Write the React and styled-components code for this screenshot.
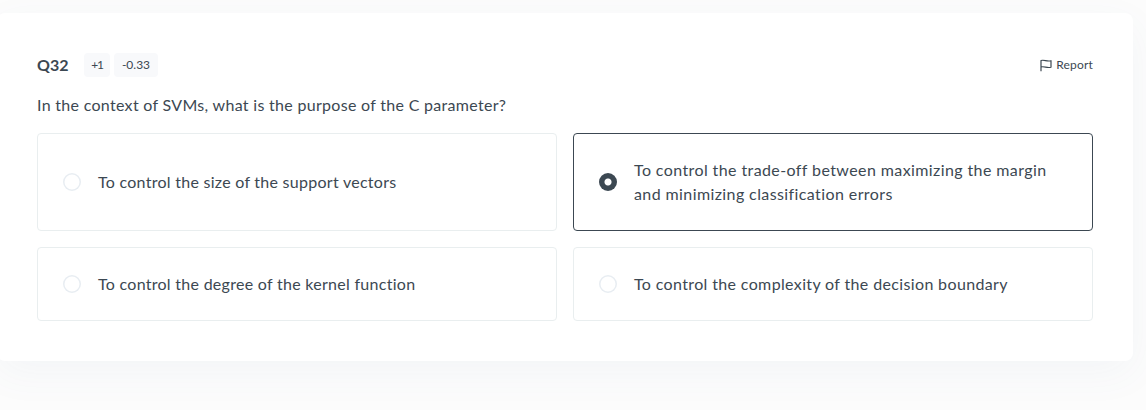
import React, { useState } from "react";
import styled, { createGlobalStyle } from "styled-components";

const options = [
  { id: 1, text: "To control the size of the support vectors", spacing: 0.27 },
  {
    id: 2,
    text: "To control the trade-off between maximizing the margin and minimizing classification errors",
    spacing: 0.4,
  },
  { id: 3, text: "To control the degree of the kernel function", spacing: 0.28 },
  { id: 4, text: "To control the complexity of the decision boundary", spacing: 0.36 },
];

const App = () => {
  const [selected, setSelected] = useState(2);

  return (
    <>
      <GlobalStyle />
      <Page>
        <Card>
          <Header>
            <QuestionNumber>Q32</QuestionNumber>
            <Marks>
              <Mark $width={26}>+1</Mark>
              <Mark $width={44}>-0.33</Mark>
            </Marks>
            <ReportButton type="button">
              <FlagIcon viewBox="0 0 12 13">
                <path d="M1 12.2V1.5C4.2 0.3 7 3 11 1.7V8.2C7 9.5 4.2 6.8 1 8" />
              </FlagIcon>
              Report
            </ReportButton>
          </Header>
          <Question>
            In the context of SVMs, what is the purpose of the C parameter?
          </Question>
          <Options>
            {options.map((item) => (
              <Option
                key={item.id}
                $active={selected === item.id}
                onClick={() => setSelected(item.id)}
              >
                <Radio $active={selected === item.id} />
                <OptionText $spacing={item.spacing}>{item.text}</OptionText>
              </Option>
            ))}
          </Options>
        </Card>
      </Page>
    </>
  );
};

export default App;

const GlobalStyle = createGlobalStyle`
  * {
    box-sizing: border-box;
  }
  body {
    margin: 0;
    background: #fcfcfc;
    color: #3c4852;
    font-family: Lato, "Liberation Sans", sans-serif;
    overflow: hidden;
  }
`;

const Page = styled.div`
  height: 410px;
  padding: 13px 13px 0 0;
  overflow: hidden;
`;

const Card = styled.section`
  height: 348px;
  margin-left: -3px;
  padding: 40px 40px 40px;
  border-radius: 8px;
  background: #fff;
  box-shadow: 0 12px 40px rgba(80, 110, 150, 0.05);
`;

const Header = styled.div`
  display: flex;
  align-items: center;
  height: 24px;
`;

const QuestionNumber = styled.h2`
  width: 47px;
  margin: 0;
  font-size: 16px;
  font-weight: 700;
  line-height: 24px;
`;

const Marks = styled.div`
  display: flex;
  gap: 4px;
`;

const Mark = styled.span`
  width: ${({ $width }) => $width}px;
  height: 24px;
  border-radius: 4px;
  background: #f8f9fb;
  font-size: 12px;
  line-height: 24px;
  text-align: center;
  white-space: nowrap;
  letter-spacing: ${({ $width }) => ($width < 30 ? "-1.2px" : "0")};
`;

const ReportButton = styled.button`
  display: flex;
  align-items: center;
  gap: 4px;
  margin-left: auto;
  padding: 0;
  border: 0;
  background: none;
  color: inherit;
  font: 12px/24px Lato, "Liberation Sans", sans-serif;
  letter-spacing: 0.2px;
  cursor: pointer;
`;

const FlagIcon = styled.svg`
  width: 12px;
  height: 13px;
  fill: none;
  stroke: currentColor;
  stroke-width: 1.2;
  stroke-linejoin: round;
`;

const Question = styled.p`
  margin: 16px 0 16px;
  font-size: 16px;
  line-height: 24px;
  letter-spacing: 0.3px;
`;

const Options = styled.div`
  display: grid;
  grid-template-columns: 1fr 1fr;
  grid-template-rows: 98px 74px;
  gap: 16px;
`;

const Option = styled.div`
  display: flex;
  align-items: center;
  padding: 0 25px;
  border: 1px solid ${({ $active }) => ($active ? "#3c4852" : "#e9eeef")};
  border-radius: 4px;
  cursor: pointer;
`;

const Radio = styled.span`
  flex: none;
  width: 18px;
  height: 18px;
  margin-right: 17px;
  border-radius: 50%;
  background: ${({ $active }) =>
    $active ? "radial-gradient(circle, #fff 3px, #3c4852 4px)" : "#fff"};
  box-shadow: ${({ $active }) => ($active ? "none" : "inset 0 0 0 1.5px #e8edf2")};
`;

const OptionText = styled.span`
  font-size: 16px;
  line-height: 24px;
  letter-spacing: ${({ $spacing }) => $spacing}px;
`;
